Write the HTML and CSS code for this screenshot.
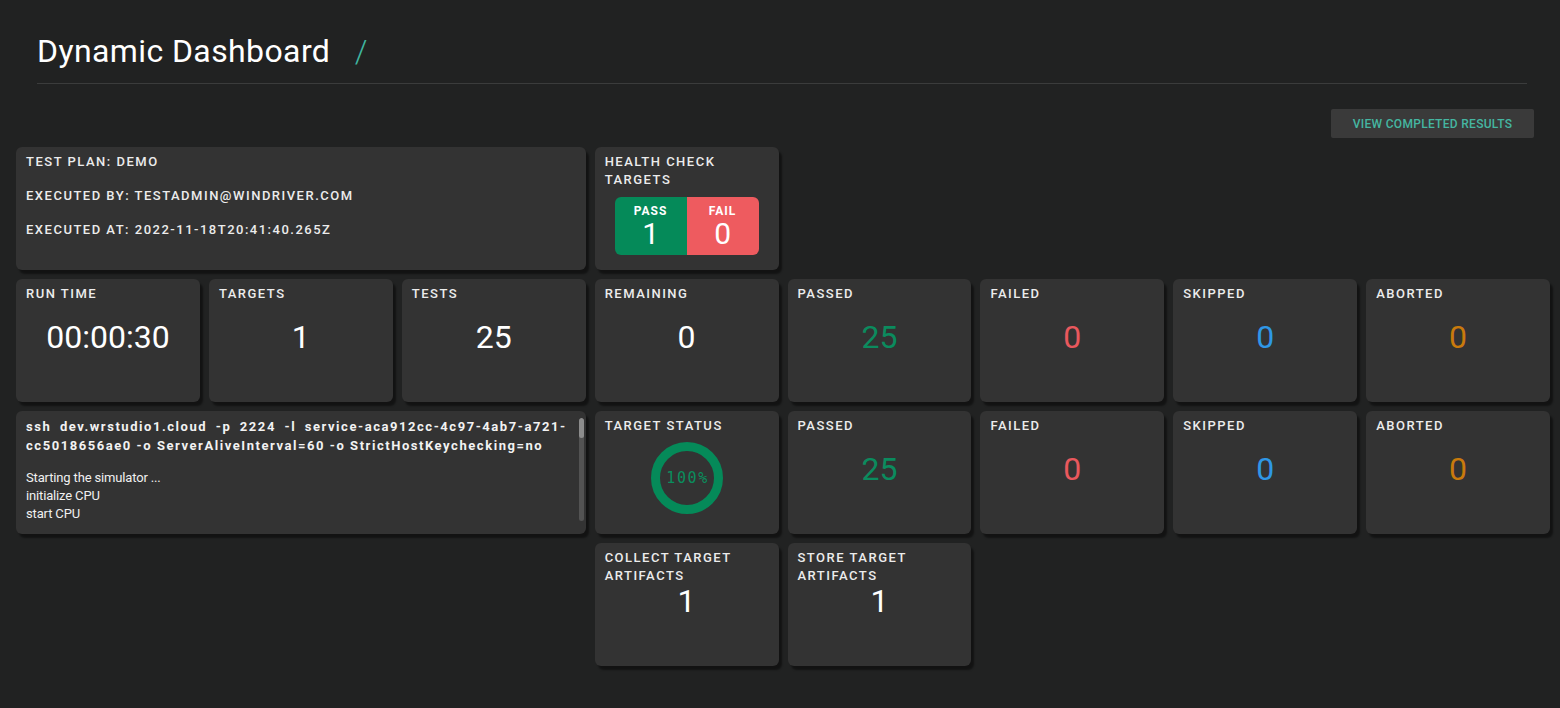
FILE: index.html
```html
<!DOCTYPE html>
<html lang="en">
<head>
<meta charset="utf-8">
<title>Dynamic Dashboard</title>
<link rel="stylesheet" href="styles.css">
</head>
<body>
<header class="page-header">
  <h1 class="title">Dynamic Dashboard <span class="crumb-sep">/</span></h1>
</header>
<div class="toolbar">
  <button class="btn-view" type="button">VIEW COMPLETED RESULTS</button>
</div>
<main class="grid">
  <section class="card card-plan">
    <p class="label plan-line">TEST PLAN: DEMO</p>
    <p class="label plan-line">EXECUTED BY: TESTADMIN@WINDRIVER.COM</p>
    <p class="label plan-line">EXECUTED AT: 2022-11-18T20:41:40.265Z</p>
  </section>
  <section class="card card-health">
    <p class="label">HEALTH CHECK TARGETS</p>
    <div class="pf">
      <div class="pf-cell pf-pass"><span class="pf-label">PASS</span><span class="pf-num">1</span></div>
      <div class="pf-cell pf-fail"><span class="pf-label">FAIL</span><span class="pf-num">0</span></div>
    </div>
  </section>
  <div class="spacer spacer-r1"></div>

  <section class="card stat"><p class="label stat-label">RUN TIME</p><div class="num">00:00:30</div></section>
  <section class="card stat"><p class="label stat-label">TARGETS</p><div class="num">1</div></section>
  <section class="card stat"><p class="label stat-label">TESTS</p><div class="num">25</div></section>
  <section class="card stat"><p class="label stat-label">REMAINING</p><div class="num">0</div></section>
  <section class="card stat"><p class="label stat-label">PASSED</p><div class="num num-pass">25</div></section>
  <section class="card stat"><p class="label stat-label">FAILED</p><div class="num num-fail">0</div></section>
  <section class="card stat"><p class="label stat-label">SKIPPED</p><div class="num num-skip">0</div></section>
  <section class="card stat"><p class="label stat-label">ABORTED</p><div class="num num-abort">0</div></section>

  <section class="card card-log">
    <div class="log">
      <p class="cmd">ssh dev.wrstudio1.cloud -p 2224 -l service-aca912cc-4c97-4ab7-a721-cc5018656ae0 -o ServerAliveInterval=60 -o StrictHostKeychecking=no</p>
      <p class="log-line">Starting the simulator ...</p>
      <p class="log-line">initialize CPU</p>
      <p class="log-line">start CPU</p>
    </div>
    <div class="scrollbar" aria-hidden="true"><div class="scroll-thumb"></div></div>
  </section>
  <section class="card stat">
    <p class="label stat-label">TARGET STATUS</p>
    <div class="donut-wrap">
      <svg class="donut" width="72" height="72" viewBox="0 0 72 72" aria-hidden="true">
        <circle cx="36" cy="36" r="31.5" fill="none" stroke="#058a59" stroke-width="9"/>
      </svg>
      <span class="donut-text">100%</span>
    </div>
  </section>
  <section class="card stat"><p class="label stat-label">PASSED</p><div class="num num-pass">25</div></section>
  <section class="card stat"><p class="label stat-label">FAILED</p><div class="num num-fail">0</div></section>
  <section class="card stat"><p class="label stat-label">SKIPPED</p><div class="num num-skip">0</div></section>
  <section class="card stat"><p class="label stat-label">ABORTED</p><div class="num num-abort">0</div></section>

  <div class="spacer spacer-r4"></div>
  <section class="card stat"><p class="label stat-label">COLLECT TARGET ARTIFACTS</p><div class="num">1</div></section>
  <section class="card stat"><p class="label stat-label">STORE TARGET ARTIFACTS</p><div class="num">1</div></section>
</main>
</body>
</html>
```
FILE: styles.css
```css
* { box-sizing: border-box; }
html, body { margin: 0; padding: 0; }
body {
  background: #212222;
  color: #ececec;
  font-family: Roboto, "Liberation Sans", Arial, sans-serif;
  width: 1560px;
  height: 708px;
  overflow: hidden;
}
p { margin: 0; }

.page-header {
  margin: 0 33px 0 37px;
  padding-top: 33px;
  padding-bottom: 14px;
  border-bottom: 1px solid #3b3c3c;
}
.title {
  margin: 0;
  font-size: 32px;
  line-height: 36px;
  font-weight: 400;
  letter-spacing: 0.4px;
  color: #ffffff;
}
.crumb-sep {
  color: #3fb5a0;
  margin-left: 16px;
  font-weight: 300;
}

.toolbar {
  display: flex;
  justify-content: flex-end;
  margin: 25px 26px 0 0;
}
.btn-view {
  width: 203px;
  height: 29px;
  border: 0;
  border-radius: 2px;
  background: #3a3a3a;
  color: #45b6a1;
  font-family: Roboto, "Liberation Sans", sans-serif;
  font-size: 12px;
  font-weight: 500;
  letter-spacing: 0.3px;
  padding: 0;
}

.grid {
  display: grid;
  grid-template-columns: repeat(8, 1fr);
  grid-auto-rows: 123px;
  gap: 9px;
  margin: 9px 10px 0 16px;
}
.card {
  background: #333333;
  border-radius: 6px;
  box-shadow: 3px 4px 2px rgba(0, 0, 0, 0.45);
  padding: 6px 10px;
  min-width: 0;
}
.label {
  font-size: 13px;
  line-height: 18px;
  font-weight: 500;
  letter-spacing: 1.5px;
  color: #ececec;
}

.card-plan { grid-column: 1 / span 3; }
.plan-line + .plan-line { margin-top: 16px; }

.card-health { grid-column: 4; }
.spacer-r1 { grid-column: 5 / span 4; }
.pf {
  display: flex;
  width: 144px;
  height: 58px;
  margin: 8px auto 0;
  border-radius: 6px;
  overflow: hidden;
}
.pf-cell {
  flex: 1;
  display: flex;
  flex-direction: column;
  align-items: center;
  color: #ffffff;
}
.pf-pass { background: #058a59; }
.pf-fail { background: #ee5b5f; }
.pf-label {
  font-size: 12px;
  font-weight: 700;
  letter-spacing: 1px;
  line-height: 14px;
  margin-top: 7px;
}
.pf-num {
  font-size: 30px;
  line-height: 30px;
  margin-top: 1px;
}

.stat-label { height: 18px; }
.num {
  margin-top: 14px;
  font-size: 32px;
  line-height: 40px;
  text-align: center;
  color: #ffffff;
  font-weight: 400;
}
.num-pass { color: #0b8b5e; }
.num-fail { color: #e9585d; }
.num-skip { color: #2f97e6; }
.num-abort { color: #c97a0c; }

.card-log {
  grid-column: 1 / span 3;
  padding: 7px 2px 13px 10px;
  display: flex;
}
.log {
  flex: 1;
  min-width: 0;
  height: 103px;
  overflow: hidden;
  padding-right: 12px;
}
.scrollbar {
  width: 5px;
  height: 103px;
  border-radius: 3px;
  background: #535353;
  overflow: hidden;
}
.scroll-thumb {
  height: 20px;
  border-radius: 3px;
  background: #8c8c8c;
}
.cmd {
  font-size: 13px;
  line-height: 18.5px;
  font-weight: 700;
  letter-spacing: 1.55px;
  text-align: justify;
  color: #f2f2f2;
  margin-bottom: 14px;
  word-break: break-word;
}
.log-line {
  font-size: 13px;
  line-height: 18px;
  letter-spacing: -0.15px;
  color: #f0f0f0;
}

.donut-wrap {
  position: relative;
  width: 72px;
  height: 72px;
  margin: 7px auto 0;
}
.donut { display: block; }
.donut-text {
  position: absolute;
  inset: 0;
  display: flex;
  align-items: center;
  justify-content: center;
  font-family: "DejaVu Sans Mono", "Liberation Mono", monospace;
  font-size: 15px;
  letter-spacing: 1.6px;
  padding-left: 2px;
  color: #0a8d5d;
}

.spacer-r4 { grid-column: 1 / span 3; }
```
